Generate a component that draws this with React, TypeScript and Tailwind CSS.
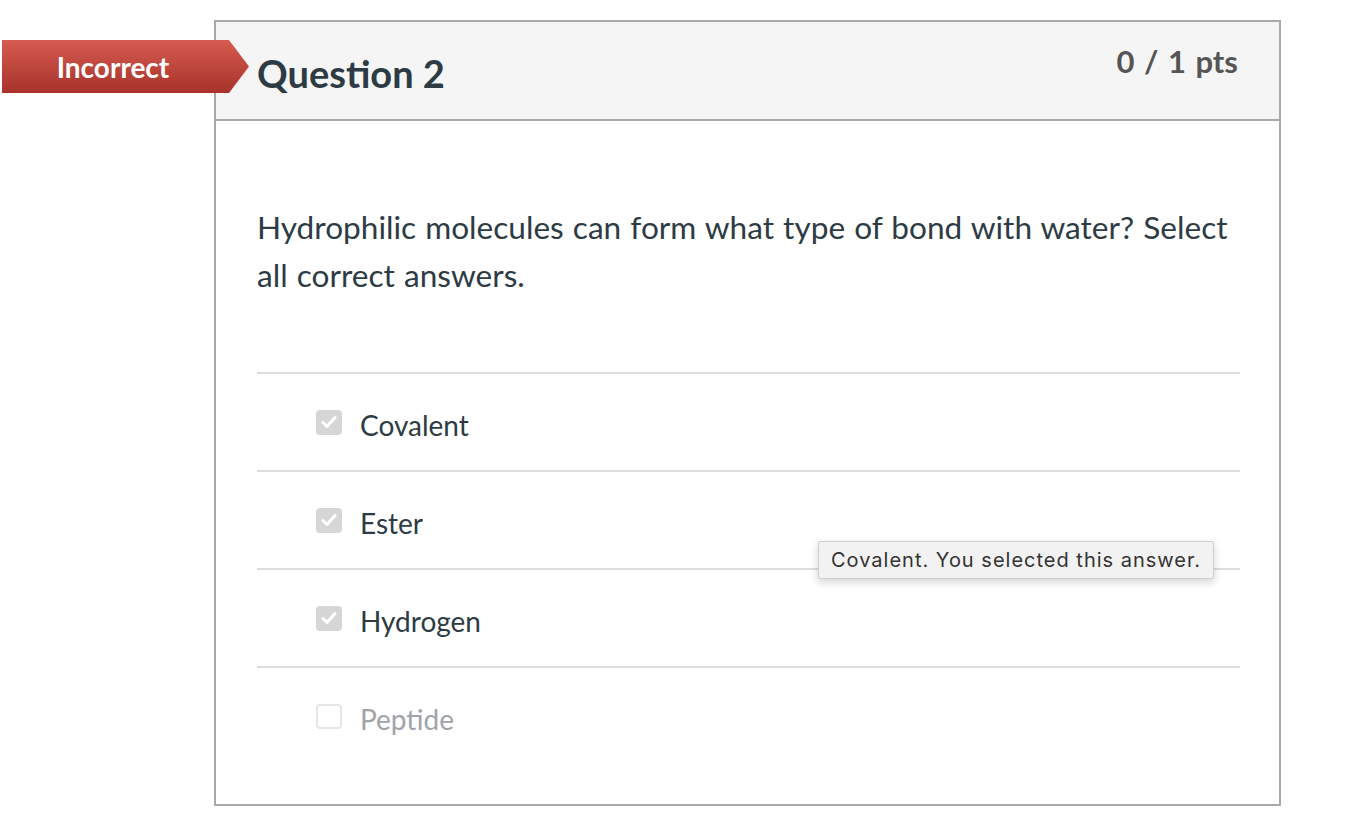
const answers = [
  { label: 'Covalent', checked: true },
  { label: 'Ester', checked: true },
  { label: 'Hydrogen', checked: true },
  { label: 'Peptide', checked: false },
]

function CheckBox({ checked }: { checked: boolean }) {
  if (!checked) {
    return <span className="block h-[25px] w-[26px] rounded-[4px] border-2 border-[#e6e6e6] bg-white" />
  }
  return (
    <span className="flex h-[25px] w-[26px] items-center justify-center rounded-[4px] bg-[#d6d6d6]">
      <svg width="16" height="14" viewBox="0 0 16 14" fill="none">
        <path d="M2 7.5 L6 11.5 L14 2.5" stroke="white" strokeWidth="3" strokeLinecap="round" strokeLinejoin="round" />
      </svg>
    </span>
  )
}

export default function App() {
  return (
    <div className="min-h-[832px] bg-white pt-5 font-['Lato','Liberation_Sans',sans-serif] text-[#2d3b45]">
      <div className="relative ml-[214px] w-[1067px] border-2 border-[#a9a9a9]">
        <div className="absolute left-[-214px] top-[18px] flex h-[53px] w-[247px] items-center bg-gradient-to-b from-[#d65b50] to-[#a7322a] [clip-path:polygon(0_0,227px_0,100%_50%,227px_100%,0_100%)]">
          <span className="w-[222px] text-center text-[28px] font-bold text-white">Incorrect</span>
        </div>

        <div className="flex h-[99px] items-start justify-between border-b-2 border-[#a9a9a9] bg-[#f5f5f5] pl-[41px] pr-[41px]">
          <h2 className="mt-[28px] text-[38px] font-bold leading-[46px]">Question 2</h2>
          <div className="mt-[19px] text-[31px] font-bold leading-[40px] text-[#555555] [word-spacing:2px]">0 / 1 pts</div>
        </div>

        <div className="pb-[40px] pl-[41px] pr-[39px] pt-[82px]">
          <p className="text-[31.6px] leading-[48px] [word-spacing:1px]">
            Hydrophilic molecules can form what type of bond with water? Select all correct answers.
          </p>

          <div className="mt-[73px]">
            {answers.map((answer) => (
              <div
                key={answer.label}
                className="flex h-[98px] items-center border-t-2 border-[#dddddd] pl-[59px]"
              >
                <CheckBox checked={answer.checked} />
                <span
                  className={
                    answer.checked
                      ? 'ml-[18px] mt-[6px] text-[28px] text-[#2d3b45]'
                      : 'ml-[18px] mt-[6px] text-[28px] text-[#a0a4a8]'
                  }
                >
                  {answer.label}
                </span>
              </div>
            ))}
          </div>
        </div>

        <div className="absolute left-[602px] top-[519px] flex h-[38px] items-center rounded-[2px] border border-[#cfcfcf] bg-[#f2f2f2] px-3 font-['Inter','Liberation_Sans',sans-serif] text-[20px] tracking-[1px] text-[#333333] shadow-[0_3px_8px_rgba(0,0,0,0.18)]">
          Covalent. You selected this answer.
        </div>
      </div>
    </div>
  )
}
